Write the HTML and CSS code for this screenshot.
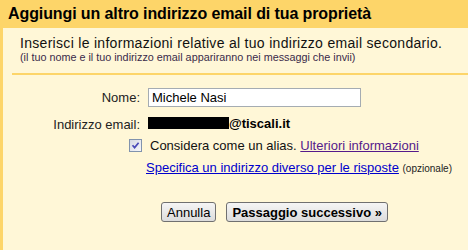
FILE: index.html
```html
<!DOCTYPE html>
<html lang="it">
<head>
    <meta charset="UTF-8">
    <title>Aggiungi indirizzo email</title>
    <link rel="stylesheet" href="styles.css">
</head>
<body>
    <div class="frame">
        <h1 class="title">Aggiungi un altro indirizzo email di tua proprietà</h1>
        <div class="panel">
            <div class="intro">
                <p class="lead">Inserisci le informazioni relative al tuo indirizzo email secondario.</p>
                <p class="note">(il tuo nome e il tuo indirizzo email appariranno nei messaggi che invii)</p>
            </div>

            <div class="form">
                <label class="label" for="nome">Nome:</label>
                <div class="field"><input class="text-input" id="nome" type="text" value="Michele Nasi"></div>

                <span class="label">Indirizzo email:</span>
                <div class="field email"><span class="redacted"></span>@tiscali.it</div>

                <span class="label"></span>
                <div class="field check-row">
                    <span class="checkbox">
                        <svg width="9" height="9" viewBox="0 0 9 9"><path d="M1.5 4.2 L3.6 6.6 L7.6 1.8" fill="none" stroke="#4a4ab8" stroke-width="1.7"/></svg>
                    </span>
                    <span>Considera come un alias. <a class="visited" href="#">Ulteriori informazioni</a></span>
                </div>

                <span class="label"></span>
                <div class="field reply-row">
                    <a href="#">Specifica un indirizzo diverso per le risposte</a> <span class="optional">(opzionale)</span>
                </div>
            </div>

            <div class="actions">
                <button class="btn">Annulla</button>
                <button class="btn btn-main">Passaggio successivo »</button>
            </div>
        </div>
    </div>
</body>
</html>
```

FILE: styles.css
```css
body {
    margin: 0;
    font-family: "Liberation Sans", Arial, sans-serif;
    color: #222;
    background-color: #fff7d7;
}

.frame {
    background-color: #fdd569;
    height: 250px;
    overflow: hidden;
}

.title {
    margin: 0;
    height: 28px;
    padding: 4px 0 0 8px;
    box-sizing: border-box;
    font-size: 16px;
    line-height: 19px;
    font-weight: bold;
    letter-spacing: -0.1px;
    color: #000;
}

.panel {
    margin-left: 3px;
    height: 222px;
    background-color: #fff7d7;
    padding-top: 7px;
    box-sizing: border-box;
}

.intro {
    margin-left: 9px;
    padding: 0 0 10px 8px;
    border-bottom: 2px solid #fdd569;
}

.lead {
    margin: 0;
    font-size: 14px;
    line-height: 16px;
    letter-spacing: 0.3px;
    color: #111;
}

.note {
    margin: 0;
    font-size: 10.8px;
    line-height: 12px;
    color: #3a2a4a;
}

.form {
    display: grid;
    grid-template-columns: 137px 1fr;
    column-gap: 8px;
    margin-top: 13px;
    font-size: 13px;
}

.label {
    text-align: right;
    color: #222;
    padding-top: 2px;
}

.field {
    min-height: 16px;
}

.text-input {
    display: block;
    width: 213px;
    height: 19px;
    box-sizing: border-box;
    border: 1px solid #a5acb2;
    padding: 1px 3px;
    font-family: "Liberation Sans", Arial, sans-serif;
    font-size: 13px;
    color: #000;
    background: #fff;
    margin-bottom: 8px;
}

.email {
    display: flex;
    align-items: center;
    font-weight: bold;
    color: #000;
    margin-bottom: 6px;
}

.redacted {
    display: inline-block;
    width: 81px;
    height: 12px;
    background: #000;
}

.check-row {
    display: flex;
    align-items: center;
    margin-left: -19px;
    color: #111;
}

.checkbox {
    width: 11px;
    height: 11px;
    border: 1px solid #8193ad;
    background: linear-gradient(135deg, #d6d9e3, #f7f7fa);
    display: inline-flex;
    align-items: center;
    justify-content: center;
    margin-right: 8px;
}

a {
    color: #0000cc;
}

a.visited {
    color: #551a8b;
}

.reply-row {
    margin-left: -2px;
    padding-top: 7px;
}

.optional {
    font-size: 10px;
    color: #222;
}

.actions {
    display: flex;
    gap: 10px;
    margin: 26px 0 0 158px;
}

.btn {
    height: 20px;
    padding: 0 5px;
    border: 1px solid #707070;
    border-radius: 3px;
    background: linear-gradient(#f5f5f5, #dcdcdc);
    font-family: "Liberation Sans", Arial, sans-serif;
    font-size: 13px;
    color: #000;
}

.btn-main {
    font-weight: bold;
}
```
